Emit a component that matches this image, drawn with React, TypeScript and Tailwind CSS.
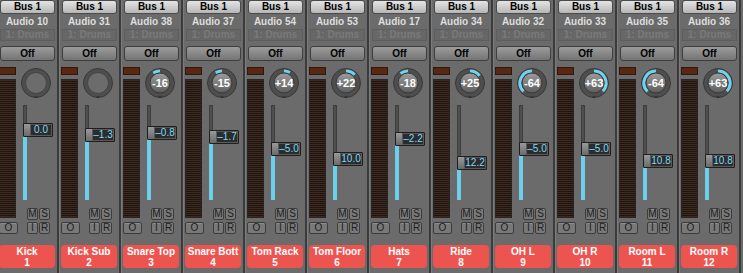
import React from "react";

type Strip = {
  name: string;
  num: number;
  audio: string;
  pan: number | null;
  vol: string;
  capY: number;
};

const strips: Strip[] = [
  { name: "Kick", num: 1, audio: "Audio 10", pan: null, vol: "0.0", capY: 130 },
  { name: "Kick Sub", num: 2, audio: "Audio 31", pan: null, vol: "–1.3", capY: 135 },
  { name: "Snare Top", num: 3, audio: "Audio 38", pan: -16, vol: "–0.8", capY: 133 },
  { name: "Snare Bott", num: 4, audio: "Audio 37", pan: -15, vol: "–1.7", capY: 137 },
  { name: "Tom Rack", num: 5, audio: "Audio 54", pan: 14, vol: "–5.0", capY: 149 },
  { name: "Tom Floor", num: 6, audio: "Audio 53", pan: 22, vol: "10.0", capY: 159 },
  { name: "Hats", num: 7, audio: "Audio 17", pan: -18, vol: "–2.2", capY: 139 },
  { name: "Ride", num: 8, audio: "Audio 34", pan: 25, vol: "12.2", capY: 163 },
  { name: "OH L", num: 9, audio: "Audio 32", pan: -64, vol: "–5.0", capY: 149 },
  { name: "OH R", num: 10, audio: "Audio 33", pan: 63, vol: "–5.0", capY: 149 },
  { name: "Room L", num: 11, audio: "Audio 35", pan: -64, vol: "10.8", capY: 161 },
  { name: "Room R", num: 12, audio: "Audio 36", pan: 63, vol: "10.8", capY: 161 },
];

// fader track spans y=105..200 on the page
const TRACK_TOP = 105;

function Knob({ pan }: { pan: number | null }) {
  const c = 15;
  const r = 12;
  let arc = "";
  if (pan !== null && pan !== 0) {
    const a = ((pan / 64) * 135 * Math.PI) / 180;
    const x = c + r * Math.sin(a);
    const y = c - r * Math.cos(a);
    arc = `M ${c} ${c - r} A ${r} ${r} 0 0 ${pan > 0 ? 1 : 0} ${x.toFixed(2)} ${y.toFixed(2)}`;
  }
  return (
    <svg width="30" height="30" viewBox="0 0 30 30" className="block">
      <defs>
        <linearGradient id="knobIn" x1="0" y1="0" x2="0" y2="1">
          <stop offset="0" stopColor="#9c9c9c" />
          <stop offset="1" stopColor="#5c5c5c" />
        </linearGradient>
      </defs>
      <circle cx={c} cy={c} r="14.5" fill="#4e4e4e" stroke="#383838" />
      <path d="M 13.5 29 L 16.5 29" stroke="#2f2f2f" strokeWidth="1.5" />
      {arc && <path d={arc} fill="none" stroke="#6fd2f0" strokeWidth="3" />}
      {pan === null ? (
        <circle cx={c} cy={c} r="10.5" fill="#6c6c6c" stroke="#444444" />
      ) : (
        <>
          <circle cx={c} cy={c} r="10" fill="url(#knobIn)" stroke="#3a3a3a" />
          <text
            x={c}
            y={c + 4}
            textAnchor="middle"
            fontSize="11"
            fontWeight="700"
            fill="#ffffff"
            fontFamily="Liberation Sans, Arial, sans-serif"
          >
            {pan > 0 ? `+${pan}` : `${pan}`}
          </text>
        </>
      )}
    </svg>
  );
}

function SmallBtn({ label, wide }: { label: string; wide?: boolean }) {
  return (
    <div
      className={`${wide ? "w-[19px]" : "w-[11px]"} h-[12px] rounded-[2px] border border-[#3c3c3c] bg-[#787878] shadow-[inset_0_1px_0_#8c8c8c] text-[10px] leading-[10px] text-center text-[#202020]`}
    >
      {label}
    </div>
  );
}

function ChannelStrip({ s }: { s: Strip }) {
  const capTop = s.capY - 7 - TRACK_TOP;
  const fillTop = s.capY - TRACK_TOP;
  return (
    <div className="w-[62px] shrink-0 h-full flex flex-col border-r-2 border-[#3b3b3b] shadow-[inset_1px_0_0_#7c7c7c]">
      <div className="ml-[3px] w-[55px] h-[14px] rounded-[3px] border border-[#4a4a4a] bg-gradient-to-b from-[#e4e4e4] to-[#b6b6b6] text-[10px] font-bold leading-[12px] text-center text-black">
        Bus 1
      </div>
      <div className="h-[15px] text-[10px] font-bold leading-[15px] text-center text-[#dedede]">
        {s.audio}
      </div>
      <div className="ml-[3px] w-[55px] h-[12px] border border-[#5e5e5e] bg-[#676767] text-[10px] font-bold leading-[10px] text-center text-[#7a7a7a] overflow-hidden">
        1: Drums
      </div>
      <div className="mt-[5px] ml-[3px] w-[55px] h-[15px] rounded-[3px] border border-[#3e3e3e] bg-gradient-to-b from-[#9c9c9c] to-[#747474] text-[10px] font-bold leading-[13px] text-center text-black">
        Off
      </div>

      <div className="mt-[6px] flex h-[153px]">
        <div className="ml-[2px] w-[17px] flex flex-col">
          <div className="h-[8px] border border-[#2a1a12] bg-[#5a2812]" />
          <div className="mt-[4px] h-[139px] border border-[#262626] bg-[repeating-linear-gradient(to_bottom,#43291d_0px,#43291d_1px,#1a1613_1px,#1a1613_2px)]" />
        </div>
        <div className="flex-1 flex flex-col">
          <div className="mt-[1px] ml-[5px]">
            <Knob pan={s.pan} />
          </div>
          <div className="mt-[7px] ml-[7px] w-[31px] h-[95px] relative">
            <div className="absolute left-0 top-0 bottom-0 w-[4px] border border-[#3d3d3d] bg-[#4f4f4f]" />
            <div
              className="absolute left-0 bottom-0 w-[4px] bg-[#6ccfec]"
              style={{ top: fillTop }}
            />
            <div
              className="absolute left-0 w-[30px] h-[14px] flex rounded-[1px] border border-[#1e1e1e] bg-[#5a5a5a]"
              style={{ top: capTop }}
            >
              <div className="w-[6px] bg-gradient-to-b from-[#9a9a9a] to-[#6a6a6a]" />
              <div className="flex-1 m-[1px] bg-[#2c2c2c] text-[10px] leading-[10px] text-center text-[#7fd9f7]">
                {s.vol}
              </div>
            </div>
          </div>
          <div className="mt-[8px] ml-[11px] flex gap-[1px]">
            <SmallBtn label="M" />
            <SmallBtn label="S" />
          </div>
        </div>
      </div>

      <div className="mt-[2px] flex">
        <div className="ml-[2px]">
          <SmallBtn label="O" wide />
        </div>
        <div className="ml-[9px] flex gap-[1px]">
          <SmallBtn label="I" />
          <SmallBtn label="R" />
        </div>
      </div>

      <div className="mt-[11px] ml-[2px] w-[56px] h-[23px] rounded-[4px] bg-[#ee544f] text-white text-[10px] font-bold leading-[11px] text-center pt-[1px] whitespace-nowrap overflow-hidden">
        <div>{s.name}</div>
        <div>{s.num}</div>
      </div>
    </div>
  );
}

export default function App() {
  return (
    <div className="w-[743px] h-[273px] overflow-hidden bg-[#6b6b6b] font-['Liberation_Sans',Arial,sans-serif]">
      <div className="flex -ml-[3px] h-full">
        {strips.map((s) => (
          <ChannelStrip key={s.num} s={s} />
        ))}
      </div>
    </div>
  );
}
